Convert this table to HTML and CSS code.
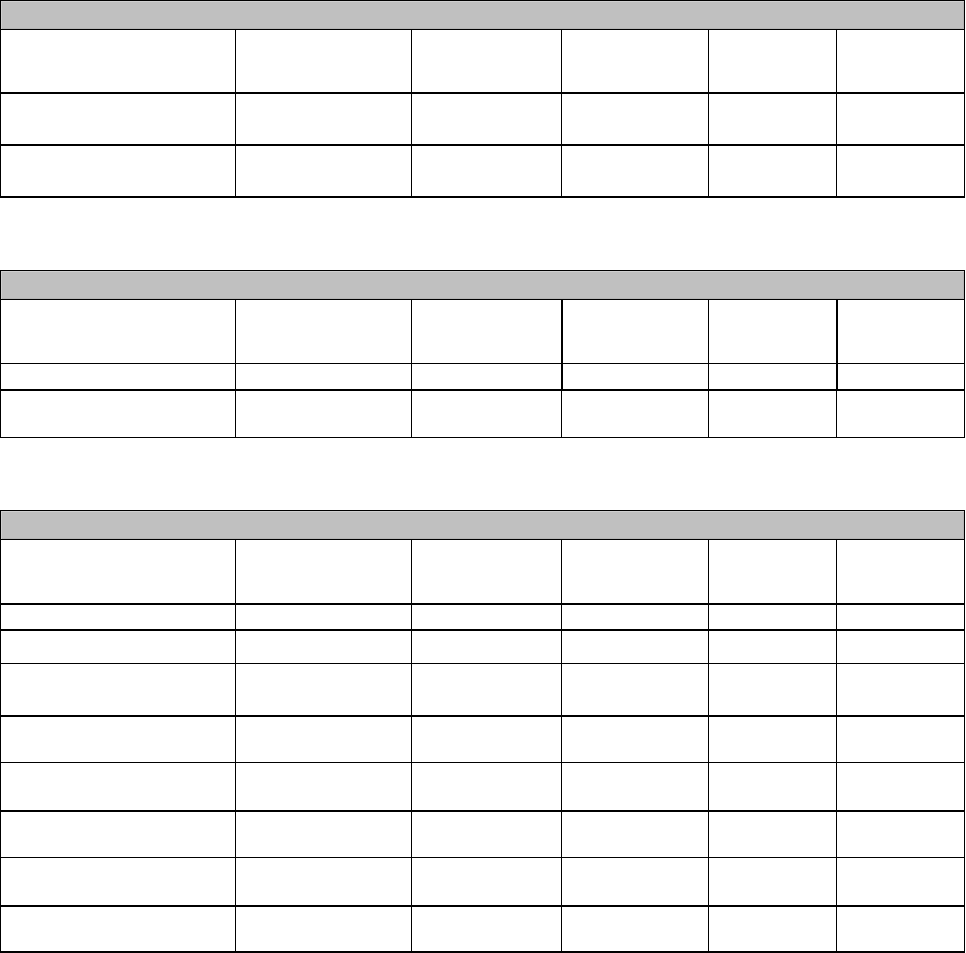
FILE: index.html
```html
<!DOCTYPE html>
<html>
<head>
<meta charset="utf-8">
<link rel="stylesheet" href="styles.css">
</head>
<body>
<div class="page">
  <div class="tbl t1">
    <div class="head"></div>
    <div class="row h63 b1"><div class="c"></div><div class="c"></div><div class="c"></div><div class="c"></div><div class="c"></div><div class="c"></div></div>
    <div class="row h52 b2"><div class="c"></div><div class="c"></div><div class="c"></div><div class="c"></div><div class="c"></div><div class="c"></div></div>
    <div class="row h52 b2"><div class="c"></div><div class="c"></div><div class="c"></div><div class="c"></div><div class="c"></div><div class="c"></div></div>
  </div>

  <div class="tbl t2">
    <div class="head"></div>
    <div class="row h64 b1"><div class="c"></div><div class="c"></div><div class="c"></div><div class="c tk"></div><div class="c"></div><div class="c tk"></div></div>
    <div class="row h26 b1"><div class="c"></div><div class="c"></div><div class="c"></div><div class="c tk"></div><div class="c"></div><div class="c tk"></div></div>
    <div class="row h48 b2"><div class="c"></div><div class="c"></div><div class="c"></div><div class="c"></div><div class="c"></div><div class="c"></div></div>
  </div>

  <div class="tbl t3">
    <div class="head"></div>
    <div class="row h64 b1"><div class="c"></div><div class="c"></div><div class="c"></div><div class="c"></div><div class="c"></div><div class="c"></div></div>
    <div class="row h26 b2"><div class="c"></div><div class="c"></div><div class="c"></div><div class="c"></div><div class="c"></div><div class="c"></div></div>
    <div class="row h34 b2"><div class="c"></div><div class="c"></div><div class="c"></div><div class="c"></div><div class="c"></div><div class="c"></div></div>
    <div class="row h52 b1"><div class="c"></div><div class="c"></div><div class="c"></div><div class="c"></div><div class="c"></div><div class="c"></div></div>
    <div class="row h47 b2"><div class="c"></div><div class="c"></div><div class="c"></div><div class="c"></div><div class="c"></div><div class="c"></div></div>
    <div class="row h48 b1"><div class="c"></div><div class="c"></div><div class="c"></div><div class="c"></div><div class="c"></div><div class="c"></div></div>
    <div class="row h47 b2"><div class="c"></div><div class="c"></div><div class="c"></div><div class="c"></div><div class="c"></div><div class="c"></div></div>
    <div class="row h48 b1"><div class="c"></div><div class="c"></div><div class="c"></div><div class="c"></div><div class="c"></div><div class="c"></div></div>
    <div class="row h46 b2"><div class="c"></div><div class="c"></div><div class="c"></div><div class="c"></div><div class="c"></div><div class="c"></div></div>
  </div>
</div>
</body>
</html>
```

FILE: styles.css
```css
* { box-sizing: border-box; }
html, body {
  margin: 0;
  padding: 0;
  background: #ffffff;
  font-family: "Liberation Sans", Arial, sans-serif;
}
.page {
  display: flex;
  flex-direction: column;
  gap: 72px;
  width: 966px;
}
.tbl {
  width: 965px;
  border: 1px solid #000;
  background: #fff;
}
.t1 { border-bottom-width: 2px; }
.t3 { border-bottom-width: 2px; }
.head {
  height: 28px;
  background: #c0c0c0;
  box-shadow: inset 1px 1px 0 #d0d0d0, inset -1px -1px 0 #b4b4b4;
}
.row {
  display: grid;
  grid-template-columns: 234px 176px 150px 147px 128px 128px;
  border-top: 1px solid #000;
}
.b1 { border-top-width: 1px; }
.b2 { border-top-width: 2px; }
.c {
  border-left: 1px solid #000;
}
.c:first-child { border-left: none; }
.c.tk { border-left-width: 2px; }
.h26 { height: 26px; }
.h34 { height: 34px; }
.h46 { height: 46px; }
.h47 { height: 47px; }
.h48 { height: 48px; }
.h52 { height: 52px; }
.h63 { height: 63px; }
.h64 { height: 64px; }
```
